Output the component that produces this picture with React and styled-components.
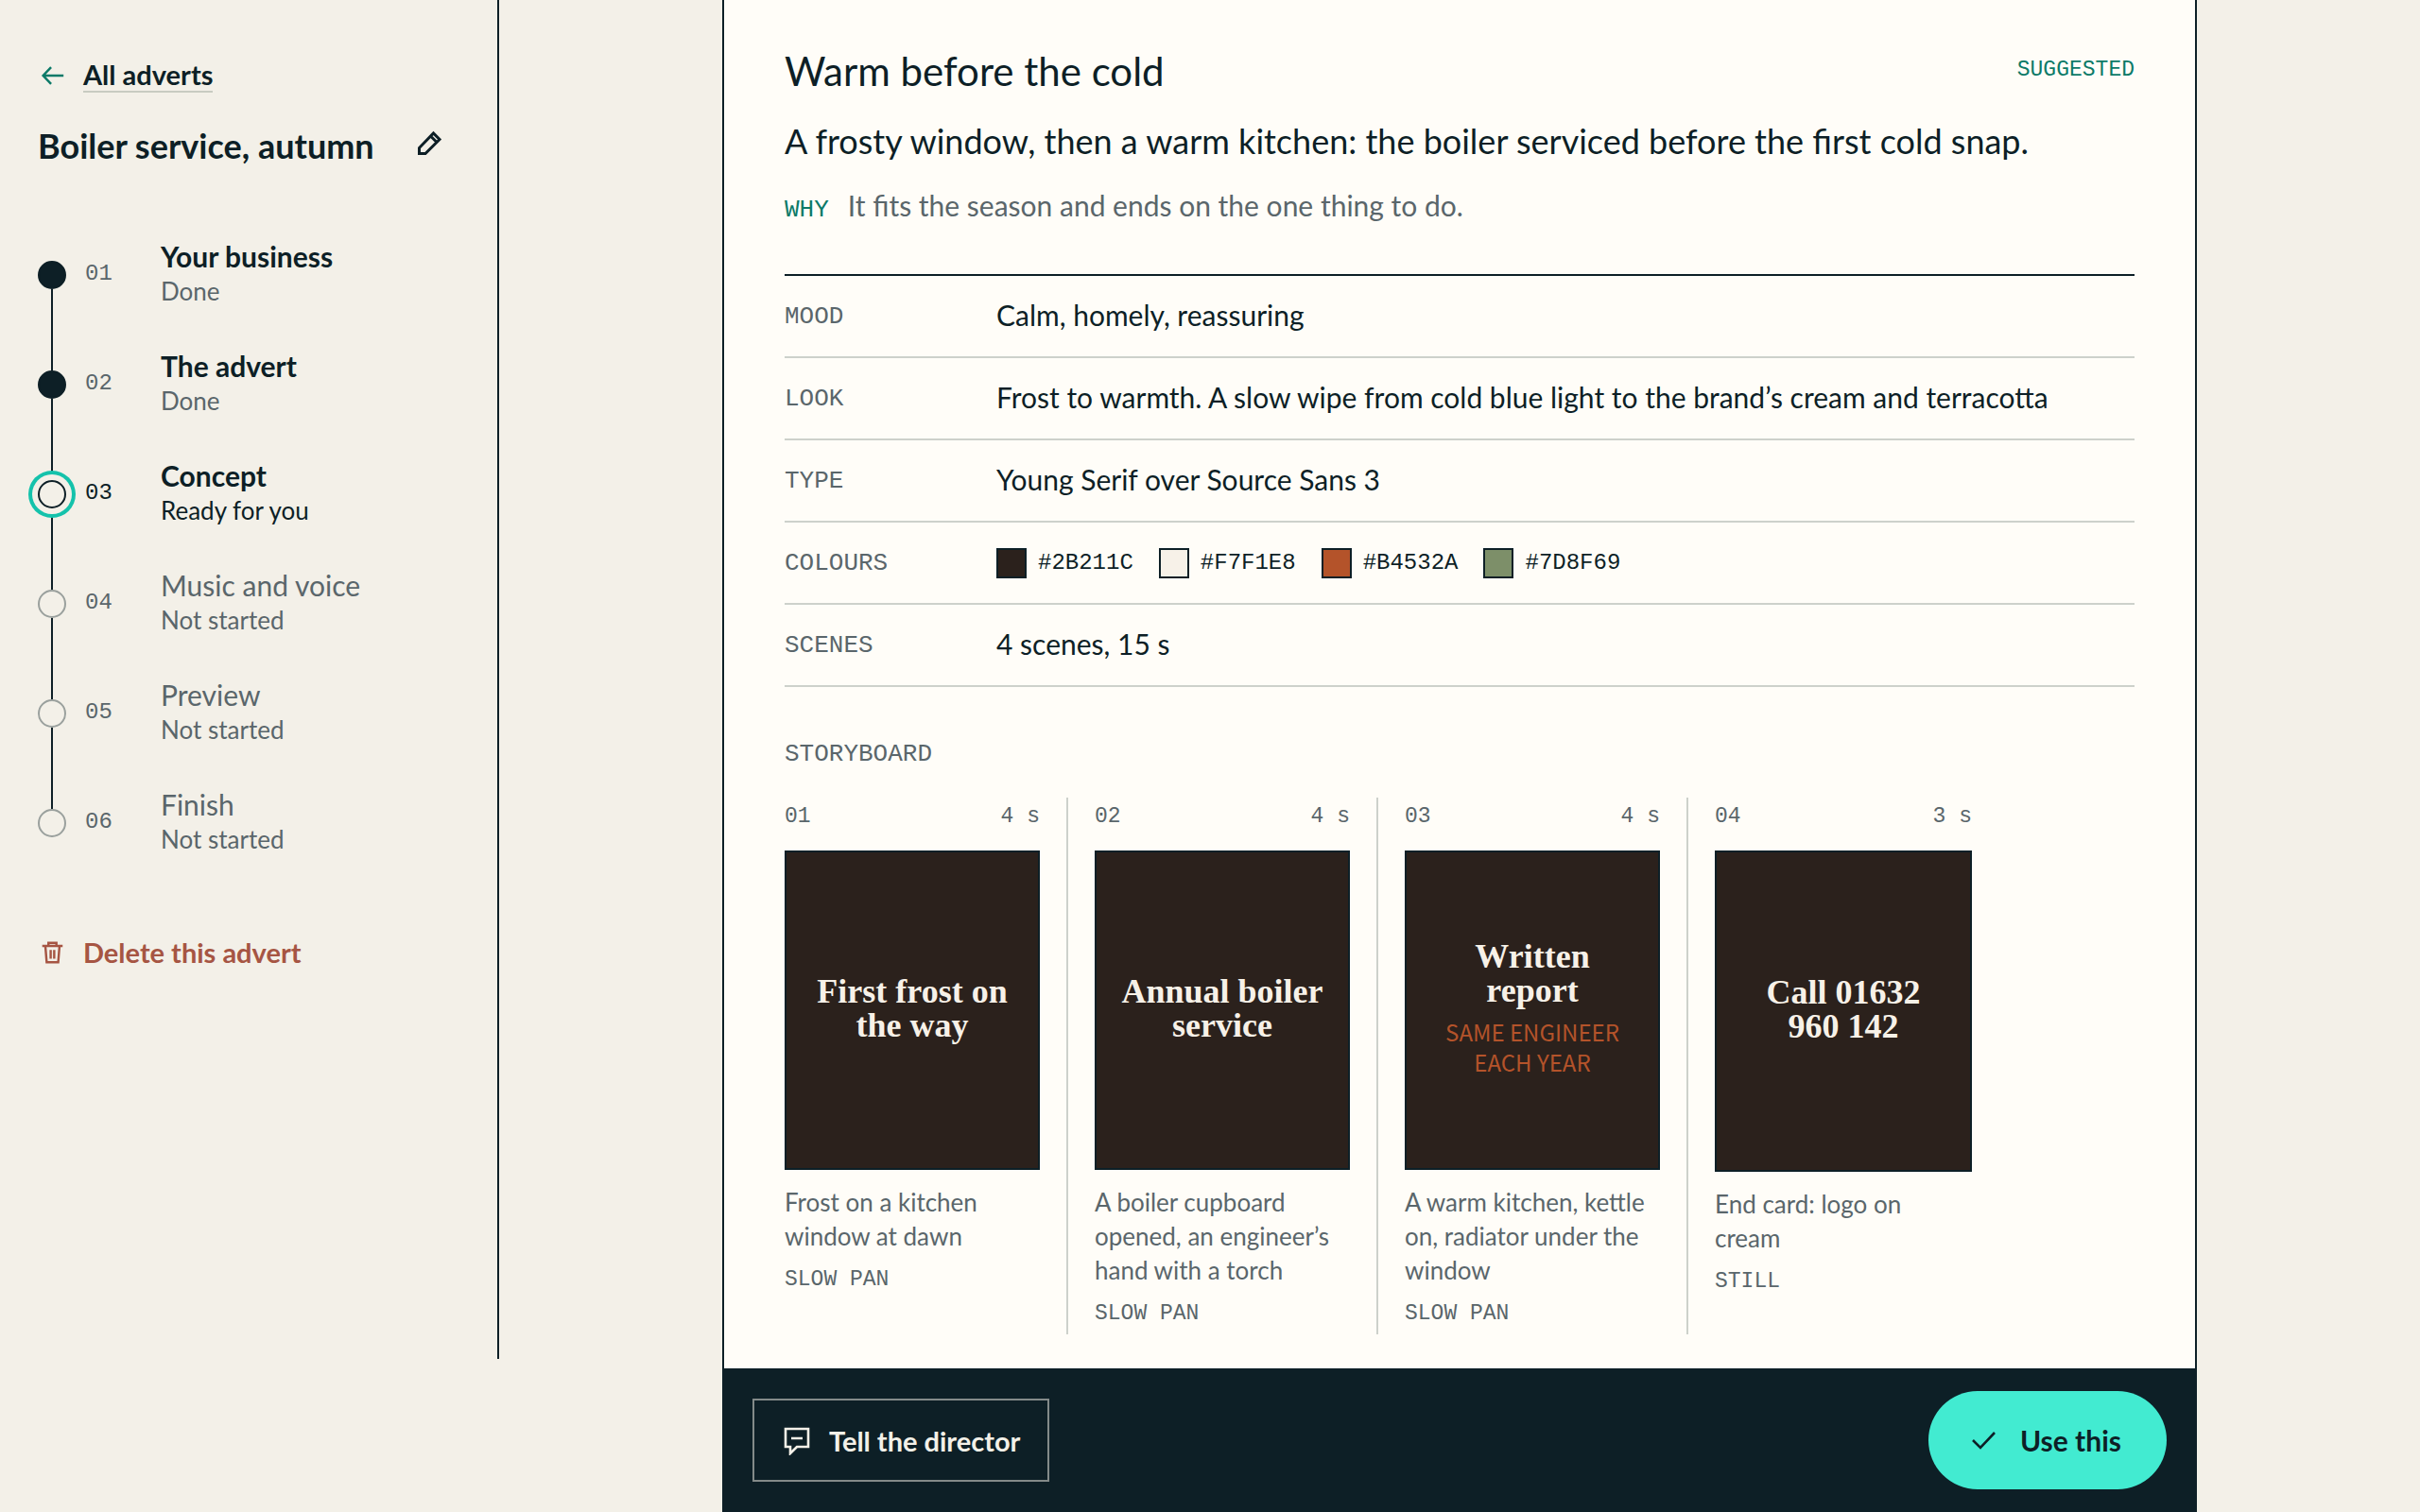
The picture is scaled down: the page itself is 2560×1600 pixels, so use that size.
import React from 'react';
import styled, { createGlobalStyle, css } from 'styled-components';

const ink = '#0d1f26';
const muted = '#5a666b';
const paper = '#f3f0e8';
const panel = '#fffdf8';
const hairline = '#cdd1cb';

const sans = "Lato, 'Open Sans', sans-serif";
const mono = "'Liberation Mono', 'DejaVu Sans Mono', monospace";
const serif = "'Liberation Serif', 'DejaVu Serif', serif";
const source = "'Noto Sans CJK JP', 'Noto Sans', sans-serif";

const GlobalStyle = createGlobalStyle`
  *, *::before, *::after {
    box-sizing: border-box;
  }
  body {
    margin: 0;
    background: ${paper};
    color: ${ink};
    font-family: ${sans};
  }
  h1, h2, h3, p, ol, dl, dd {
    margin: 0;
    padding: 0;
  }
  button {
    font: inherit;
    cursor: pointer;
  }
`;

const Page = styled.div`
  display: grid;
  grid-template-columns: 528px minmax(0, 1fr);
  min-height: 100vh;
`;

const Sidebar = styled.aside`
  height: calc(100vh - 162px);
  padding: 60px 56px 0 40px;
  border-right: 2px solid ${ink};
`;

const BackLink = styled.a`
  display: flex;
  align-items: center;
  gap: 18px;
  height: 40px;
  color: ${ink};
  font-size: 29px;
  font-weight: 700;
  line-height: 34px;
  text-decoration: none;
  svg {
    color: #0c7a68;
  }
`;

const Underlined = styled.span`
  border-bottom: 2px solid #c8cbc1;
`;

const AdvertHead = styled.div`
  display: flex;
  align-items: center;
  justify-content: space-between;
  height: 44px;
  margin-top: 32px;
`;

const AdvertName = styled.h1`
  font-size: 36px;
  font-weight: 700;
  line-height: 44px;
`;

const IconButton = styled.button`
  display: flex;
  padding: 0 0 4px;
  border: none;
  background: none;
  color: ${ink};
`;

const Steps = styled.ol`
  margin-top: 76px;
  list-style: none;
`;

const Step = styled.li`
  display: grid;
  grid-template-columns: 30px 60px 1fr;
  column-gap: 20px;
  height: 116px;
  color: ${(props) => (props.$state === 'current' ? ink : muted)};
`;

const Track = styled.span`
  display: flex;
  flex-direction: column;
  align-items: center;
  padding-top: 24px;
  margin-bottom: -24px;
  &::after {
    content: '';
    flex: 1;
    width: 2px;
    background: ${(props) => (props.$last ? 'transparent' : ink)};
  }
`;

const Dot = styled.span`
  z-index: 1;
  width: 30px;
  height: 30px;
  flex: none;
  border-radius: 50%;
  border: 2px solid #9aa09d;
  background: ${paper};
  ${(props) => props.$state === 'done' && css`
    border-color: ${ink};
    background: ${ink};
  `}
  ${(props) => props.$state === 'current' && css`
    border-color: ${ink};
    box-shadow: 0 0 0 6px ${paper}, 0 0 0 10px #14c2ab;
  `}
`;

const StepNumber = styled.span`
  padding-top: 24px;
  font-family: ${mono};
  font-size: 24px;
  line-height: 28px;
`;

const StepName = styled.h3`
  color: ${(props) => (props.$state === 'todo' ? muted : ink)};
  font-size: 30px;
  font-weight: ${(props) => (props.$state === 'todo' ? 400 : 700)};
  line-height: 38px;
`;

const StepStatus = styled.p`
  font-size: 26px;
  line-height: 36px;
`;

const DeleteButton = styled.button`
  display: flex;
  align-items: center;
  gap: 18px;
  margin-top: 40px;
  padding: 0;
  border: none;
  background: none;
  color: #a65543;
  font-size: 29px;
  font-weight: 700;
  line-height: 40px;
`;

const Main = styled.main`
  display: flex;
  justify-content: center;
`;

const Panel = styled.section`
  display: flex;
  flex-direction: column;
  width: 100%;
  max-width: 1560px;
  border: solid ${ink};
  border-width: 0 2px;
  background: ${panel};
`;

const PanelBody = styled.div`
  flex: 1;
  padding: 48px 64px 36px;
`;

const TitleRow = styled.div`
  display: flex;
  align-items: flex-start;
  justify-content: space-between;
`;

const Title = styled.h2`
  font-size: 42px;
  font-weight: 400;
  line-height: 54px;
`;

const Tag = styled.span`
  padding-top: 12px;
  color: #0c7a68;
  font-family: ${mono};
  font-size: 23px;
  line-height: 28px;
`;

const Tagline = styled.p`
  margin-top: 24px;
  font-size: 36px;
  line-height: 46px;
`;

const Reason = styled.p`
  display: flex;
  align-items: baseline;
  gap: 20px;
  margin-top: 25px;
  color: ${muted};
  font-size: 30px;
  line-height: 40px;
`;

const Label = styled.span`
  color: ${(props) => (props.$accent ? '#0c7a68' : muted)};
  font-family: ${mono};
  font-size: 26px;
  font-weight: 400;
`;

const Facts = styled.dl`
  margin-top: 48px;
  border-top: 2px solid ${ink};
`;

const Fact = styled.div`
  display: grid;
  grid-template-columns: 224px 1fr;
  align-items: center;
  height: 87px;
  border-bottom: 2px solid ${hairline};
`;

const FactValue = styled.dd`
  padding-bottom: 4px;
  font-size: 30px;
  line-height: 40px;
`;

const Swatches = styled.dd`
  display: flex;
  gap: 27px;
`;

const Swatch = styled.span`
  display: flex;
  align-items: center;
  gap: 12px;
  font-family: ${mono};
  font-size: 24px;
  line-height: 32px;
  &::before {
    content: '';
    width: 32px;
    height: 32px;
    border: 2px solid ${ink};
    background: ${(props) => props.$color};
  }
`;

const SectionTitle = styled.h3`
  margin-top: 55px;
  color: ${muted};
  font-family: ${mono};
  font-size: 26px;
  font-weight: 400;
  line-height: 32px;
`;

const Storyboard = styled.ol`
  display: flex;
  margin-top: 30px;
  list-style: none;
`;

const Scene = styled.li`
  width: 328px;
  min-height: 568px;
  padding: 6px 28px 8px;
  border-right: 2px solid ${hairline};
  &:first-child {
    width: 300px;
    padding-left: 0;
  }
  &:last-child {
    border-right: none;
  }
`;

const SceneHead = styled.div`
  display: flex;
  justify-content: space-between;
  color: ${muted};
  font-family: ${mono};
  font-size: 23px;
  line-height: 28px;
  margin-bottom: 22px;
`;

const Frame = styled.div`
  display: flex;
  flex-direction: column;
  align-items: center;
  justify-content: center;
  aspect-ratio: 4 / 5;
  padding: 0 24px 4px;
  border: 2px solid ${ink};
  background: #2b211c;
  text-align: center;
`;

const Headline = styled.p`
  color: #f7f1e8;
  font-family: ${serif};
  font-size: 36px;
  font-weight: 700;
  line-height: 36px;
`;

const Subline = styled.p`
  margin-top: 10px;
  color: #b4532a;
  font-family: ${source};
  font-size: 24px;
  line-height: 32px;
  text-transform: uppercase;
`;

const Caption = styled.p`
  margin-top: 16px;
  color: ${muted};
  font-size: 26px;
  line-height: 36px;
`;

const Motion = styled.p`
  margin-top: 14px;
  color: ${muted};
  font-family: ${mono};
  font-size: 23px;
  line-height: 28px;
  text-transform: uppercase;
`;

const ActionBar = styled.footer`
  display: flex;
  align-items: center;
  justify-content: space-between;
  height: 152px;
  padding: 0 30px;
  background: ${ink};
`;

const TellButton = styled.button`
  display: flex;
  align-items: center;
  gap: 18px;
  height: 88px;
  padding: 0 29px;
  border: 2px solid #838a89;
  background: none;
  color: ${paper};
  font-size: 29px;
  font-weight: 700;
`;

const UseButton = styled.button`
  display: flex;
  align-items: center;
  gap: 22px;
  height: 104px;
  padding: 0 48px 0 43px;
  border: none;
  border-radius: 52px;
  background: #42ebd1;
  color: ${ink};
  font-size: 30px;
  font-weight: 700;
`;

const Icon = ({ size = 32, weight = 2.6, children }) => (
  <svg width={size} height={size} viewBox="0 0 32 32" fill="none" stroke="currentColor" strokeWidth={weight} aria-hidden="true">
    {children}
  </svg>
);

const steps = [
  { name: 'Your business', status: 'Done', state: 'done' },
  { name: 'The advert', status: 'Done', state: 'done' },
  { name: 'Concept', status: 'Ready for you', state: 'current' },
  { name: 'Music and voice', status: 'Not started', state: 'todo' },
  { name: 'Preview', status: 'Not started', state: 'todo' },
  { name: 'Finish', status: 'Not started', state: 'todo' },
];

const colours = ['#2B211C', '#F7F1E8', '#B4532A', '#7D8F69'];

const scenes = [
  {
    time: '4 s', headline: 'First frost on the way', caption: 'Frost on a kitchen window at dawn', motion: 'Slow pan',
  },
  {
    time: '4 s', headline: 'Annual boiler service', caption: 'A boiler cupboard opened, an engineer’s hand with a torch', motion: 'Slow pan',
  },
  {
    time: '4 s', headline: 'Written report', subline: 'Same engineer each year', caption: 'A warm kitchen, kettle on, radiator under the window', motion: 'Slow pan',
  },
  {
    time: '3 s', headline: 'Call 01632 960 142', caption: 'End card: logo on cream', motion: 'Still',
  },
];

const number = (index) => `0${index + 1}`;

const App = () => (
  <>
    <GlobalStyle />
    <Page>
      <Sidebar>
        <BackLink href="#adverts">
          <Icon size={30}>
            <path d="M29 16H6M15 6.500L6 16l9 9.500" />
          </Icon>
          <Underlined>All adverts</Underlined>
        </BackLink>
        <AdvertHead>
          <AdvertName>Boiler service, autumn</AdvertName>
          <IconButton type="button" aria-label="Rename advert">
            <Icon weight={3}>
              <path d="M5.500 26.500v-6L20.500 5l6.500 6.500L12 26.500zM17.500 8l6.500 6.500" />
            </Icon>
          </IconButton>
        </AdvertHead>
        <Steps>
          {steps.map((step, index) => (
            <Step key={step.name} $state={step.state}>
              <Track $last={index === steps.length - 1}>
                <Dot $state={step.state} />
              </Track>
              <StepNumber>{number(index)}</StepNumber>
              <div>
                <StepName $state={step.state}>{step.name}</StepName>
                <StepStatus>{step.status}</StepStatus>
              </div>
            </Step>
          ))}
        </Steps>
        <DeleteButton type="button">
          <Icon size={30}>
            <path d="M5 8.500h23M12 8.500V5h9v3.500M8.500 8.500l1.500 18.500h13l1.500-18.500M14.500 13v10M18.500 13v10" />
          </Icon>
          Delete this advert
        </DeleteButton>
      </Sidebar>
      <Main>
        <Panel>
          <PanelBody>
            <TitleRow>
              <Title>Warm before the cold</Title>
              <Tag>SUGGESTED</Tag>
            </TitleRow>
            <Tagline>
              A frosty window, then a warm kitchen: the boiler serviced before the first cold snap.
            </Tagline>
            <Reason>
              <Label $accent>WHY</Label>
              It fits the season and ends on the one thing to do.
            </Reason>
            <Facts>
              <Fact>
                <Label as="dt">MOOD</Label>
                <FactValue>Calm, homely, reassuring</FactValue>
              </Fact>
              <Fact>
                <Label as="dt">LOOK</Label>
                <FactValue>
                  Frost to warmth. A slow wipe from cold blue light to the brand’s cream and terracotta
                </FactValue>
              </Fact>
              <Fact>
                <Label as="dt">TYPE</Label>
                <FactValue>Young Serif over Source Sans 3</FactValue>
              </Fact>
              <Fact>
                <Label as="dt">COLOURS</Label>
                <Swatches>
                  {colours.map((colour) => (
                    <Swatch key={colour} $color={colour}>{colour}</Swatch>
                  ))}
                </Swatches>
              </Fact>
              <Fact>
                <Label as="dt">SCENES</Label>
                <FactValue>4 scenes, 15 s</FactValue>
              </Fact>
            </Facts>
            <SectionTitle>STORYBOARD</SectionTitle>
            <Storyboard>
              {scenes.map((scene, index) => (
                <Scene key={scene.headline}>
                  <SceneHead>
                    <span>{number(index)}</span>
                    <span>{scene.time}</span>
                  </SceneHead>
                  <Frame>
                    <Headline>{scene.headline}</Headline>
                    {scene.subline ? <Subline>{scene.subline}</Subline> : null}
                  </Frame>
                  <Caption>{scene.caption}</Caption>
                  <Motion>{scene.motion}</Motion>
                </Scene>
              ))}
            </Storyboard>
          </PanelBody>
          <ActionBar>
            <TellButton type="button">
              <Icon>
                <path d="M4 4h24v19H16l-7 7v-7H4zM10 14h12" />
              </Icon>
              Tell the director
            </TellButton>
            <UseButton type="button">
              <Icon>
                <path d="M4 16l8 8L27 8" />
              </Icon>
              Use this
            </UseButton>
          </ActionBar>
        </Panel>
      </Main>
    </Page>
  </>
);

export default App;
